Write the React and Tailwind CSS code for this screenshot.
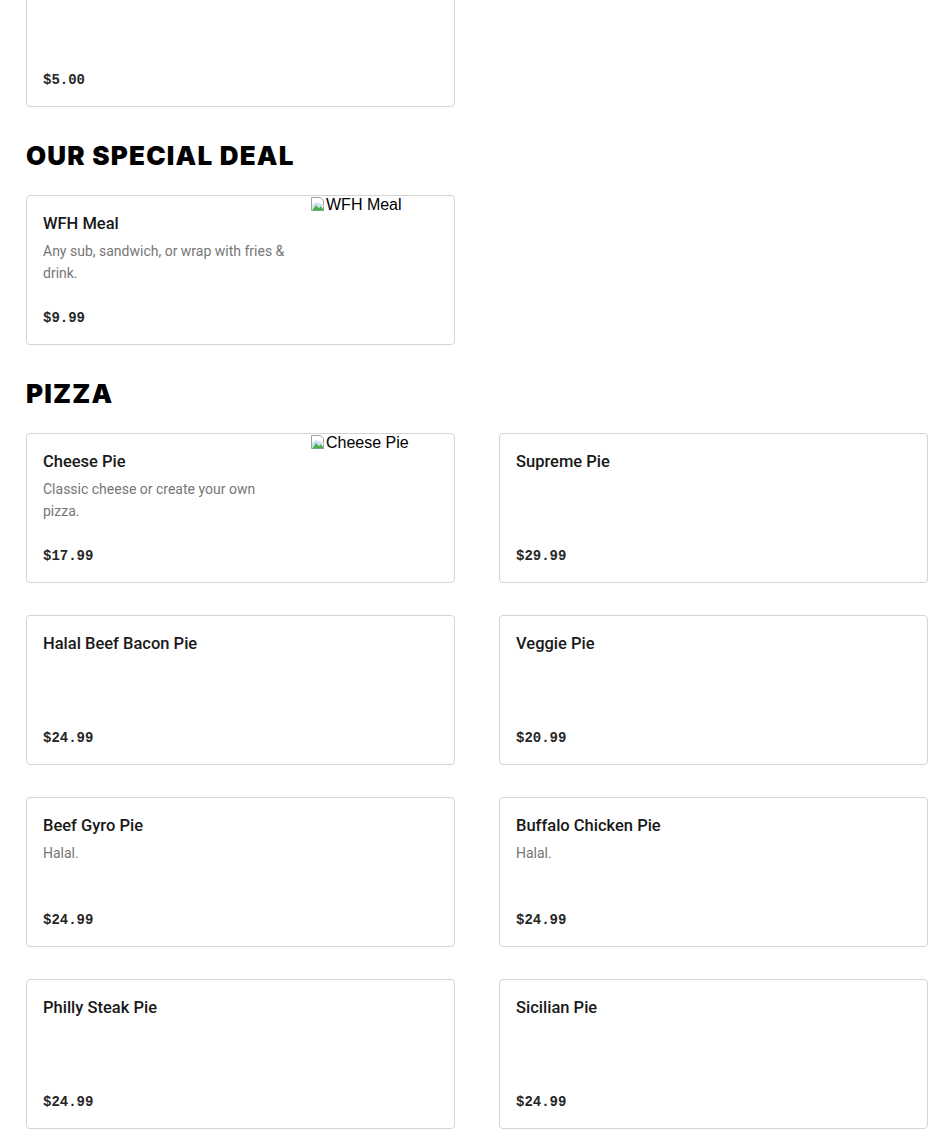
const sections = [
    {
        title: "OUR SPECIAL DEAL",
        items: [
            {
                name: "WFH Meal",
                desc: "Any sub, sandwich, or wrap with fries & drink.",
                price: "$9.99",
                img: true,
            },
        ],
    },
    {
        title: "PIZZA",
        items: [
            {
                name: "Cheese Pie",
                desc: "Classic cheese or create your own pizza.",
                price: "$17.99",
                img: true,
            },
            { name: "Supreme Pie", price: "$29.99" },
            { name: "Halal Beef Bacon Pie", price: "$24.99" },
            { name: "Veggie Pie", price: "$20.99" },
            { name: "Beef Gyro Pie", desc: "Halal.", price: "$24.99" },
            { name: "Buffalo Chicken Pie", desc: "Halal.", price: "$24.99" },
            { name: "Philly Steak Pie", price: "$24.99" },
            { name: "Sicilian Pie", price: "$24.99" },
        ],
    },
];

function BrokenImage({ alt }) {
    return (
        <div className="w-36 shrink-0 flex items-start text-[16px] leading-[18px] text-black font-['Liberation_Sans',sans-serif]">
            <svg width="16" height="16" viewBox="0 0 16 16" className="shrink-0">
                <path d="M1.5 1.5h9l3 3v10h-12z" fill="#fff" stroke="#9aa0a6" />
                <path d="M2 9 L6 6 L14 9 V10 L11 10 L9 12 L6 9 L2 14 Z" fill="#cfe3f5" />
                <path d="M2 14.5 L6 9 L9 12 L11 10 L14 14.5 Z" fill="#4caf50" />
            </svg>
            <span>{alt}</span>
        </div>
    );
}

function ItemCard({ item }) {
    return (
        <div className="h-[150px] flex bg-white border border-[#d4d4d4] rounded-[4px] overflow-hidden">
            <div className="flex-1 flex flex-col p-4 min-w-0">
                <div className="h-6 text-[16.5px] leading-6 font-medium text-[#191919]">
                    {item.name}
                </div>
                {item.desc && (
                    <div className="mt-1 text-[14px] leading-[22px] text-[#767676]">
                        {item.desc}
                    </div>
                )}
                <div className="mt-auto text-[14px] leading-5 font-bold text-[#262626] font-['Liberation_Mono',monospace]">
                    {item.price}
                </div>
            </div>
            {item.img && <BrokenImage alt={item.name} />}
        </div>
    );
}

export default function App() {
    return (
        <div className="min-h-screen bg-white pl-[26px] pr-[22px] font-['Roboto',sans-serif] pb-8">
            {/* previous section, scrolled past */}
            <div className="h-[107px] overflow-hidden flex flex-col justify-end">
                <div className="grid grid-cols-2 gap-x-[44px]">
                    <ItemCard item={{ name: "", price: "$5.00" }} />
                </div>
            </div>

            {sections.map((section) => (
                <div key={section.title}>
                    <h2 className="mt-[34px] mb-[24px] text-[26px] leading-[30px] font-black tracking-[1.2px] text-black font-['Inter',sans-serif]">
                        {section.title}
                    </h2>
                    <div className="grid grid-cols-2 gap-x-[44px] gap-y-[32px]">
                        {section.items.map((item) => (
                            <ItemCard key={item.name} item={item} />
                        ))}
                    </div>
                </div>
            ))}
        </div>
    );
}
